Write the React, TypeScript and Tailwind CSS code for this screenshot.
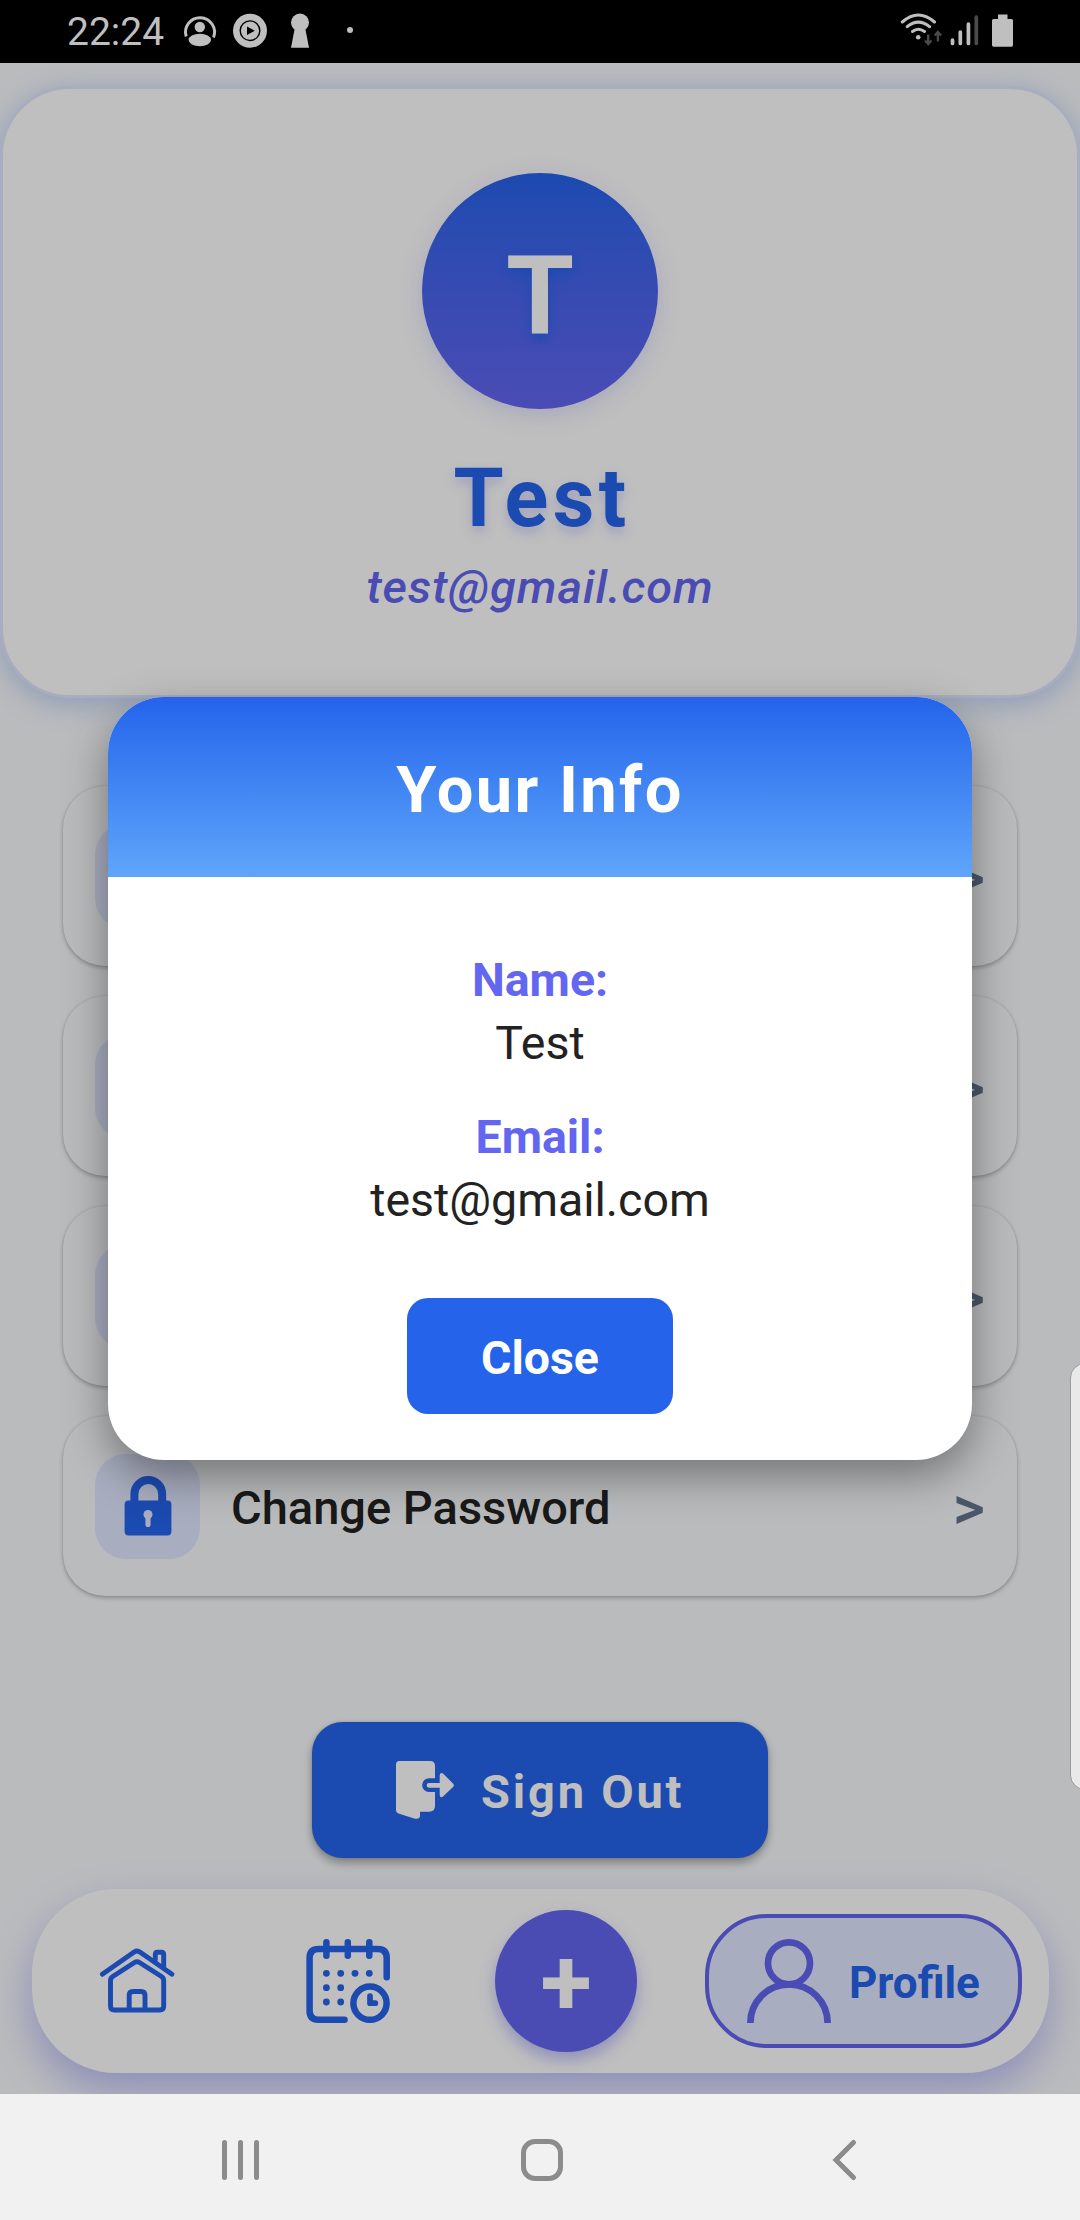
import React from "react";

function StatusBar() {
  return (
    <header className="flex h-[63px] shrink-0 items-start bg-black text-[#bfbfbf]">
      <span className="ml-[67px] mt-[9px] w-[99px] text-[39px] leading-[46px]">22:24</span>
      <svg className="ml-[16px] mt-[12px]" width="36" height="37" viewBox="182 12 36 37" fill="currentColor">
        <path d="M186.2 36.500A14.500 14.500 0 1 1 213.500 37.500" fill="none" stroke="currentColor" strokeWidth="3" />
        <circle cx="199.800" cy="27" r="5.200" />
        <ellipse cx="199.800" cy="40" rx="11.200" ry="6.200" />
      </svg>
      <svg className="ml-[14px] mt-[12px]" width="36" height="37" viewBox="232 12 36 37" fill="currentColor">
        <circle cx="250" cy="30.700" r="17" />
        <circle cx="250" cy="30.700" r="9.800" fill="none" stroke="#000" strokeWidth="1.400" />
        <path d="M247 26.500L254.800 30.700L247 34.900Z" fill="#000" />
      </svg>
      <svg className="ml-[22px] mt-[12px]" width="20" height="37" viewBox="290 12 20 37" fill="currentColor">
        <circle cx="300" cy="22.500" r="9" />
        <path d="M295.200 26H304.800L309 47.700H291Z" />
      </svg>
      <span className="ml-[37px] mt-[27px] size-[6px] rounded-full bg-[#bfbfbf]" />
      <svg className="ml-auto mt-[12px]" width="44" height="37" viewBox="900 12 44 37" fill="none" stroke="currentColor" strokeWidth="3" strokeLinecap="round">
        <path d="M902.300 22Q918.200 8 934.500 22M907.300 26.700Q918.200 17.500 929.500 26.700M912.500 31.500Q918.200 27 924.500 31.500" />
        <circle cx="918.200" cy="37.300" r="2.300" fill="currentColor" stroke="none" />
        <path d="M928.200 34.500V43.500M925 40.500L928.200 44L931.400 40.500M937.900 41.500V32.500M934.700 35.500L937.900 32L941.100 35.500" stroke="#4a4a4a" strokeWidth="2.400" strokeLinecap="butt" />
      </svg>
      <svg className="ml-[6px] mt-[12px]" width="30" height="37" viewBox="950 12 30 37" stroke="currentColor" strokeWidth="3.700" strokeLinecap="round">
        <path d="M952.500 40V43.500M960.300 32V43.500M968.400 24V43.500" />
        <path d="M976.300 17V43.500" stroke="#4a4a4a" />
      </svg>
      <svg className="ml-[12px] mr-[66px] mt-[12px]" width="22" height="37" viewBox="992 12 22 37" fill="currentColor">
        <path d="M998 14.500H1007.500V19H1011.500Q1013 19 1013 20.500V45Q1013 46.700 1011.500 46.700H993.500Q992 46.700 992 45V20.500Q992 19 993.500 19H998Z" />
      </svg>
    </header>
  );
}

function ProfileHeader() {
  return (
    <section className="mt-[23px] flex h-[612px] shrink-0 flex-col items-center rounded-[70px] border-[3px] border-[#e0e7ff] bg-white pt-[84px] shadow-[0_6px_28px_rgba(37,99,235,0.28)]">
      <div className="flex size-[236px] items-center justify-center rounded-full bg-gradient-to-b from-[#2563eb] to-[#6366f1] shadow-[0_6px_24px_rgba(99,102,241,0.2)]">
        <span className="mt-[9px] text-[110px] font-bold leading-[130px] text-white [text-shadow:0_6px_12px_#2563eb]">T</span>
      </div>
      <h1 className="mt-[43px] pl-[4px] text-[81px] font-bold leading-[94px] tracking-[4.4px] text-[#2563eb] [text-shadow:0_6px_12px_rgba(99,102,241,0.28)]">Test</h1>
      <p className="mt-[13px] text-[47px] font-medium italic leading-[56px] tracking-[0.9px] text-[#6366f1]">test@gmail.com</p>
    </section>
  );
}

function LockIcon() {
  return (
    <svg width="50" height="62" viewBox="122.400 1475.500 50 62" fill="#2563eb">
      <path d="M133.800 1503V1494.500A13.900 13.900 0 0 1 161.600 1494.500V1503" fill="none" stroke="#2563eb" strokeWidth="8" />
      <rect x="124" y="1501" width="46.800" height="35" rx="4" />
      <circle cx="147.400" cy="1515" r="4.500" fill="#e0e7ff" />
      <path d="M147.400 1516V1525" stroke="#e0e7ff" strokeWidth="5.200" strokeLinecap="round" />
    </svg>
  );
}

function MenuRow({ label, icon }: { label?: string; icon?: React.ReactNode }) {
  return (
    <div className="flex h-[180px] items-center rounded-[42px] bg-[#f8fafc] pl-[32px] pr-[32px] shadow-[0_2px_4px_rgba(0,0,0,0.25),0_0_2px_rgba(0,0,0,0.12)]">
      <div className="flex size-[105px] items-center justify-center rounded-[31px] bg-[#e0e7ff]">{icon}</div>
      <span className="ml-[31px] mt-[3px] grow text-[47px] font-medium leading-[56px] text-[#222]">{label}</span>
      <span className="mt-[4px] text-[62px] font-medium leading-[72px] text-[#64748b]">&gt;</span>
    </div>
  );
}

function SignOutButton() {
  return (
    <button className="mx-auto mt-[126px] flex h-[136px] w-[456px] shrink-0 items-center rounded-[31px] bg-[#2563eb] pl-[82px] text-white shadow-[0_5px_10px_rgba(0,0,0,0.32),0_0_3px_rgba(0,0,0,0.15)]">
      <svg width="62" height="62" viewBox="394 1759 62 62" fill="currentColor">
        <path d="M399.500 1761H430Q435 1761 435 1766V1778.300H429A6.800 6.800 0 0 0 429 1792H435V1806Q435 1811.700 429 1811.700H420V1816.500Q419.500 1819.500 415 1818.700L398.500 1813.500Q396 1812.500 396 1810.500V1764.500Q396 1761 399.500 1761Z" />
        <path d="M429 1783H439.700V1775.500Q440 1772 443 1773.500L453 1783.500Q454.800 1785.300 453 1787L443 1796.500Q440 1798.500 439.700 1795V1787.700H429A2.300 2.300 0 0 1 429 1783Z" />
      </svg>
      <span className="ml-[25px] mt-[4px] text-[47px] font-bold leading-[56px] tracking-[2.8px]">Sign Out</span>
    </button>
  );
}

function BottomNav() {
  return (
    <nav className="mx-[32px] mt-[31px] flex h-[184px] w-[1017px] shrink-0 items-center rounded-[84px] bg-white shadow-[0_18px_40px_rgba(99,102,241,0.4)]">
      <svg className="ml-[66px]" width="78" height="84" viewBox="98 1939 78 84" fill="none" stroke="#2563eb" strokeWidth="4.900" strokeLinecap="round" strokeLinejoin="round">
        <path d="M102.300 1974.200L134.500 1951.800Q137 1950.300 139.500 1951.800L172 1974.200" />
        <path d="M155.300 1960V1954.500Q155.300 1952.200 157.500 1952.200H161.500Q163.700 1952.200 163.700 1954.500V1967" />
        <path d="M134.500 1962.500Q137 1960.800 139.500 1962.500L161.500 1976.500Q163.700 1978 163.700 1980.500V2006Q163.700 2010 159.700 2010H114.300Q110.500 2010 110.500 2006V1980.500Q110.500 1978 112.700 1976.500Z" />
        <path d="M129.200 2009V1995.500Q129.200 1991.500 133 1991.500H141Q145 1991.500 145 1995.500V2009" />
      </svg>
      <svg className="ml-[128px]" width="88" height="88" viewBox="304 1937 88 88" fill="none" stroke="#2563eb" strokeWidth="6.500" strokeLinecap="round">
        <path d="M386.700 1977.300V1958Q386.700 1949 377.700 1949H318.600Q309.600 1949 309.600 1958V2010.700Q309.600 2019.700 318.600 2019.700H344.500" />
        <path d="M326.400 1942.200V1955.800M347.800 1942.200V1955.800M369.300 1942.200V1955.800" />
        <g fill="#2563eb" stroke="none">
          <circle cx="326.400" cy="1973.300" r="3.400" />
          <circle cx="340.700" cy="1973.300" r="3.400" />
          <circle cx="355" cy="1973.300" r="3.400" />
          <circle cx="369.300" cy="1973.300" r="3.400" />
          <circle cx="326.400" cy="1987.700" r="3.400" />
          <circle cx="340.700" cy="1987.700" r="3.400" />
          <circle cx="326.400" cy="2002" r="3.400" />
          <circle cx="340.700" cy="2002" r="3.400" />
        </g>
        <circle cx="370" cy="2003.200" r="16.600" />
        <path d="M370 1996V2003.200H375.300" strokeWidth="5.700" strokeLinejoin="round" />
      </svg>
      <button className="ml-[103px] flex size-[142px] items-center justify-center rounded-full bg-[#6366f1] shadow-[0_8px_16px_rgba(99,102,241,0.4)]">
        <span className="mt-[4px] text-[94px] font-bold leading-[100px] text-white">+</span>
      </button>
      <button className="ml-[68px] flex h-[134px] w-[317px] items-center rounded-[62px] border-4 border-[#6366f1] bg-[#e0e7ff] pl-[36px]">
        <svg width="88" height="88" viewBox="744 1937 88 88" fill="none" stroke="#6366f1" strokeWidth="6.700">
          <circle cx="788" cy="1963.300" r="21" />
          <path d="M749.400 2023A38.600 38.600 0 0 1 826.600 2023" />
        </svg>
        <span className="ml-[16px] mt-[4px] text-[44px] font-bold leading-[52px] text-[#2563eb]">Profile</span>
      </button>
    </nav>
  );
}

function InfoModal() {
  return (
    <div className="absolute inset-0 flex items-center justify-center bg-black/25">
      <div className="flex h-[763px] w-[864px] flex-col items-center overflow-hidden rounded-[56px] bg-white shadow-[0_16px_44px_rgba(0,0,0,0.38)]">
        <div className="flex h-[180px] w-full items-center justify-center bg-gradient-to-b from-[#2563eb] to-[#60a5fa]">
          <h2 className="mt-[5px] text-[65px] font-bold leading-[76px] tracking-[2.3px] text-white">Your Info</h2>
        </div>
        <p className="mt-[76px] text-[46.5px] font-bold leading-[54px] text-[#6366f1]">Name:</p>
        <p className="mt-[9px] text-[46.5px] leading-[54px] text-[#222]">Test</p>
        <p className="mt-[40px] text-[46.5px] font-bold leading-[54px] text-[#6366f1]">Email:</p>
        <p className="mt-[9px] text-[46.5px] leading-[54px] text-[#222]">test@gmail.com</p>
        <button className="mt-[71px] flex h-[116px] w-[266px] items-center justify-center rounded-[21px] bg-[#2563eb] pt-[4px] text-[46.5px] font-bold leading-[54px] text-white">Close</button>
      </div>
    </div>
  );
}

function SystemNav() {
  return (
    <footer className="flex h-[126px] shrink-0 items-center bg-[#f1f1f1]">
      <div className="ml-[222px] mt-[6px] flex gap-[11px]">
        <span className="h-[40px] w-[5px] rounded-full bg-[#8c8c8c]" />
        <span className="h-[40px] w-[5px] rounded-full bg-[#8c8c8c]" />
        <span className="h-[40px] w-[5px] rounded-full bg-[#8c8c8c]" />
      </div>
      <span className="ml-[262px] mt-[6px] size-[42px] rounded-[14px] border-[5px] border-[#8c8c8c]" />
      <svg className="ml-[268px] mt-[6px]" width="28" height="44" viewBox="831 2138 28 44" fill="none" stroke="#8c8c8c" strokeWidth="5" strokeLinecap="round">
        <path d="M853.500 2142.500L836 2160L853.500 2177.500" />
      </svg>
    </footer>
  );
}

export default function App() {
  return (
    <div className="flex h-[2220px] w-[1080px] flex-col overflow-hidden font-['Roboto',sans-serif]">
      <StatusBar />
      <main className="relative flex h-[2031px] shrink-0 flex-col overflow-hidden bg-[#f8fafc]">
        <ProfileHeader />
        <div className="mx-[63px] mt-[88px] flex shrink-0 flex-col gap-[30px]">
          <MenuRow />
          <MenuRow />
          <MenuRow />
          <MenuRow label="Change Password" icon={<LockIcon />} />
        </div>
        <SignOutButton />
        <BottomNav />
        <InfoModal />
        <div className="absolute right-[-20px] top-[1300px] h-[427px] w-[30px] rounded-[16px] border border-[#9a9b9c] bg-[#e9e9e9]" />
      </main>
      <SystemNav />
    </div>
  );
}
